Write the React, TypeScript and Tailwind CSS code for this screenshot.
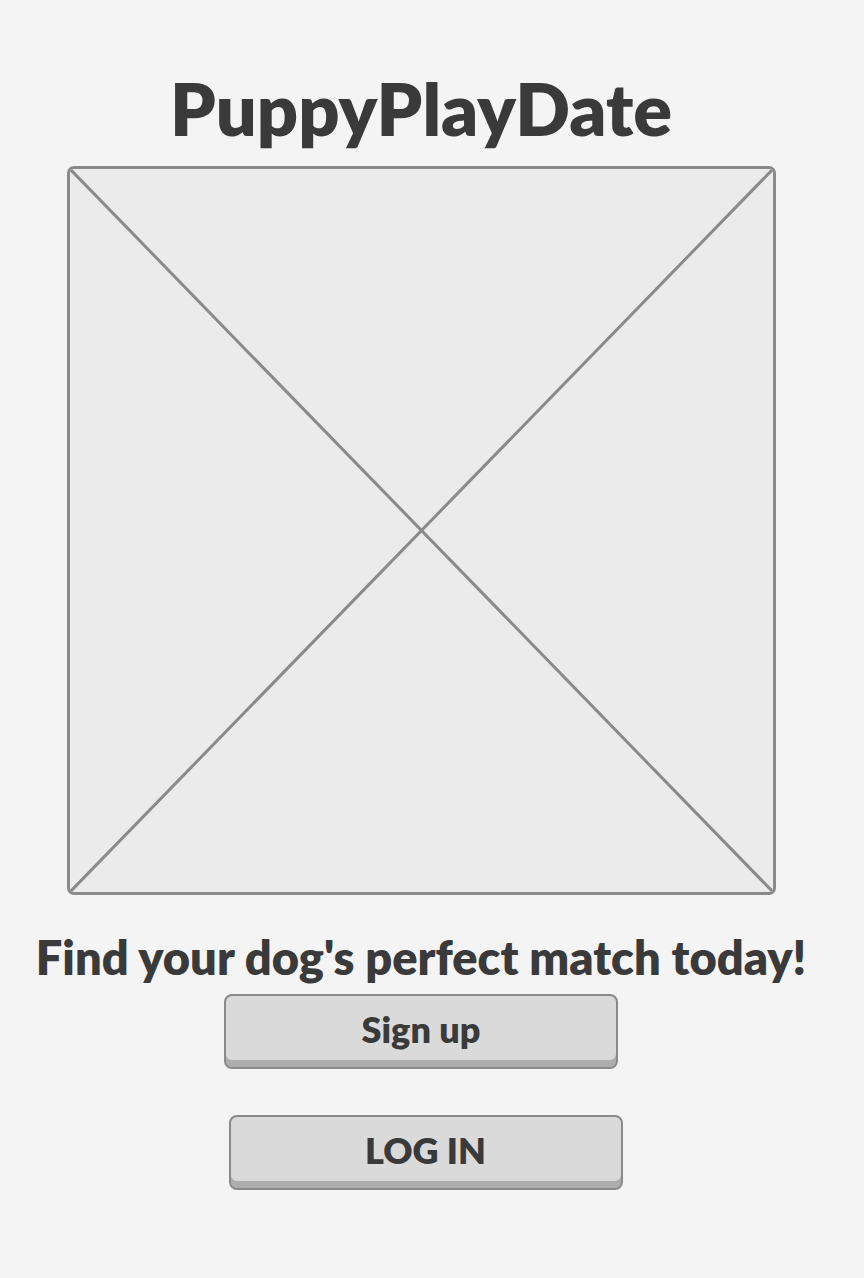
import React from 'react';

const font = { fontFamily: 'Lato, "Open Sans", sans-serif' };

function Placeholder() {
  return (
    <div className="relative w-[709px] h-[729px] border-[3px] border-[#8a8a8a] rounded-[7px] bg-[#ebebeb] overflow-hidden">
      <svg className="absolute inset-0 w-full h-full" viewBox="0 0 100 100" preserveAspectRatio="none">
        <line x1="0" y1="0" x2="100" y2="100" stroke="#8a8a8a" strokeWidth="3" vectorEffect="non-scaling-stroke" />
        <line x1="100" y1="0" x2="0" y2="100" stroke="#8a8a8a" strokeWidth="3" vectorEffect="non-scaling-stroke" />
      </svg>
    </div>
  );
}

function Button({ label, className = '' }: { label: string; className?: string }) {
  return (
    <button
      className={`w-[394px] h-[75px] rounded-[8px] border-2 border-[#8a8a8a] bg-[#dadada] shadow-[inset_0_-7px_0_#adadad] text-[36px] font-extrabold text-[#3a3a3a] pb-[5px] ${className}`}
    >
      {label}
    </button>
  );
}

export default function App() {
  return (
    <div className="min-h-[1278px] w-full bg-[#f4f4f4]" style={font}>
      <div className="w-[842px] flex flex-col items-center">
        <h1 className="mt-[66px] text-[72px] leading-[84px] font-extrabold text-[#3a3a3a]">PuppyPlayDate</h1>
        <div className="mt-[16px]">
          <Placeholder />
        </div>
        <p className="mt-[35px] text-[47px] leading-[54px] font-extrabold text-[#3a3a3a] whitespace-nowrap">
          Find your dog's perfect match today!
        </p>
        <Button label="Sign up" className="mt-[10px]" />
        <Button label="LOG IN" className="mt-[46px] ml-[9px]" />
      </div>
    </div>
  );
}
